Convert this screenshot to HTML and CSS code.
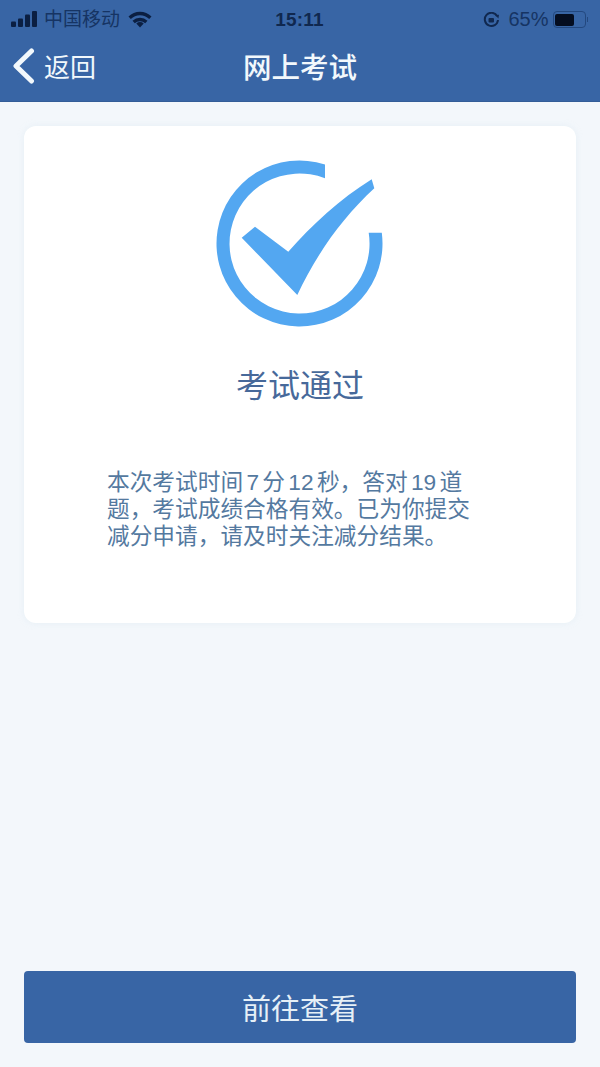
FILE: index.html
```html
<!DOCTYPE html>
<html lang="zh-CN">
<head>
<meta charset="utf-8">
<title>网上考试</title>
<link rel="stylesheet" href="styles.css">
</head>
<body>
<div class="page">
  <header class="header">
    <div class="status">
      <div class="status-left">
        <svg class="signal" viewBox="0 0 26 17"><rect x="0" y="10.500" width="5" height="5.500" rx="1"/><rect x="7" y="7.500" width="5" height="8.500" rx="1"/><rect x="14" y="3.500" width="5" height="12.500" rx="1"/><rect x="21" y="0" width="5" height="16" rx="1"/></svg>
        <span class="carrier">中国移动</span>
        <svg class="wifi" viewBox="0 0 24 17"><path d="M12 16.500 8.300 12.400a5.500 5.500 0 0 1 7.400 0z"/><path d="M.5 5.400a16.500 16.500 0 0 1 23 0l-2.300 2.700a13 13 0 0 0-18.400 0z"/><path d="M4.500 9.700a11 11 0 0 1 15 0l-2.300 2.500a7.600 7.600 0 0 0-10.400 0z"/></svg>
      </div>
      <div class="clock">15:11</div>
      <div class="status-right">
        <svg class="lock" viewBox="0 0 17 16"><path class="lock-ring" d="M14.200 4.200A6.600 6.600 0 1 0 15 8"/><path class="lock-tip" d="M12.300 3 16 2.800 15.400 6.500z"/><rect class="lock-body" x="5.500" y="6" width="5.500" height="4.500" rx="1"/></svg>
        <span class="percent">65%</span>
        <div class="battery"><div class="battery-shell"><div class="battery-fill"></div></div><div class="battery-nub"></div></div>
      </div>
    </div>
    <nav class="nav">
      <div class="back">
        <svg class="chevron" viewBox="0 0 24 36"><path d="M19.500 3 4 18l15.500 15"/></svg>
        <span>返回</span>
      </div>
      <div class="nav-title">网上考试</div>
      <div></div>
    </nav>
  </header>
  <main class="content">
    <section class="card">
      <svg class="result-icon" viewBox="217 161 166 166">
        <path class="ring" d="M325 164.500A83 83 0 1 0 381.800 232.700H368.700A70 70 0 1 1 325 178.300z"/>
        <path class="tick" d="M241.700 237.700 255 226.700 288.300 251.700C312 225 340 199 371.700 179.300L374.300 188.300C342 218 316 255 297.300 295z"/>
      </svg>
      <h1 class="result-title">考试通过</h1>
      <p class="result-text">本次考试时间 7 分 12 秒，答对 19 道题，考试成绩合格有效。已为你提交减分申请，请及时关注减分结果。</p>
    </section>
  </main>
  <div class="actions"><button class="primary">前往查看</button></div>
</div>
</body>
</html>
```
FILE: styles.css
```css
* { box-sizing: border-box; }
html, body { margin: 0; padding: 0; }
body { font-family: "Liberation Sans", "Noto Sans CJK SC", sans-serif; background: #f3f7fb; }
.page { width: 600px; height: 1067px; display: flex; flex-direction: column; overflow: hidden; }

.header { height: 102px; background: #3865a5; border-bottom: 1px solid #335d98; color: #f2f8fc; }
.status { height: 33px; padding: 6px 12px 0 11px; display: grid; grid-template-columns: 1fr auto 1fr; align-items: center; color: #12315f; }
.status-left { display: flex; align-items: center; }
.signal { width: 26px; height: 17px; fill: #0b1f42; margin-top: -1px; }
.carrier { margin-left: 7px; font-size: 19px; line-height: 22px; color: #163463; }
.wifi { width: 24px; height: 17px; margin-left: 8px; fill: #0b1f42; }
.clock { font-size: 19px; font-weight: 700; color: #10284f; letter-spacing: 0.2px; }
.status-right { display: flex; align-items: center; justify-content: flex-end; }
.lock { width: 17px; height: 16px; }
.lock-ring { fill: none; stroke: #10284f; stroke-width: 2; }
.lock-tip, .lock-body { fill: #10284f; }
.percent { margin-left: 8px; font-size: 20px; color: #163463; }
.battery { margin-left: 4px; display: flex; align-items: center; }
.battery-shell { width: 33px; height: 17px; border: 1.500px solid #23487f; border-radius: 4px; padding: 1.500px; }
.battery-fill { width: 19px; height: 100%; background: #040d20; border-radius: 2px; }
.battery-nub { width: 1.500px; height: 5px; margin-left: 1px; background: #23487f; }

.nav { height: 68px; padding-bottom: 3px; display: grid; grid-template-columns: 1fr auto 1fr; align-items: center; }
.back { display: flex; align-items: center; padding-left: 12px; font-size: 26px; }
.chevron { width: 24px; height: 36px; fill: none; stroke: #f2f8fc; stroke-width: 5; stroke-linecap: round; stroke-linejoin: round; }
.back span { margin-left: 8px; }
.nav-title { font-size: 28.500px; font-weight: 500; }

.content { flex: 1; padding: 24px 24px 0; }
.card { height: 497px; background: #fff; border-radius: 12px; box-shadow: 0 0 6px rgba(210, 225, 238, 0.35); padding-top: 35px; display: flex; flex-direction: column; align-items: center; }
.result-icon { width: 166px; height: 166px; overflow: visible; }
.ring { fill: #53a7f1; }
.tick { fill: #53a7f1; }
.result-title { margin: 39px 0 0; font-size: 32px; line-height: 40px; font-weight: 400; color: #47699a; }
.result-text { align-self: flex-start; width: 370px; margin: 63px 0 0 83px; font-size: 22.700px; line-height: 27px; word-spacing: -3px; color: #54799f; }

.actions { padding: 0 24px 24px; }
.primary { width: 100%; height: 72px; display: block; border: 0; border-radius: 4px; background: #3865a5; color: #e6f0f7; font-family: inherit; font-size: 29px; }
```
